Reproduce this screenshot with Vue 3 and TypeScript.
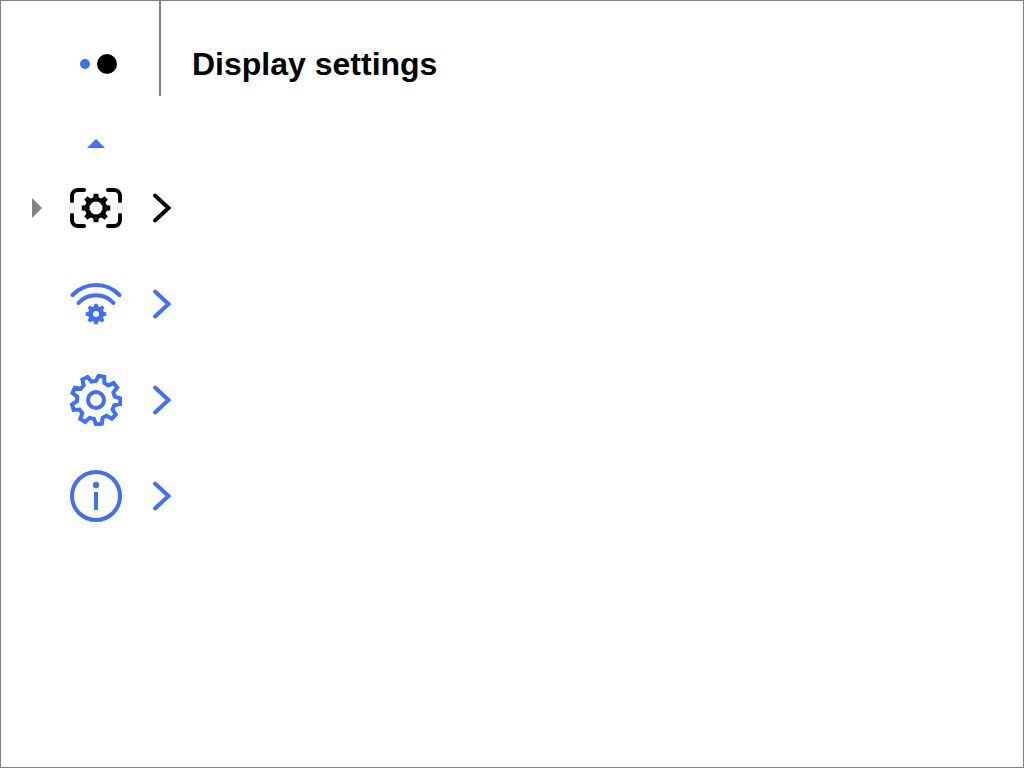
<script setup lang="ts">
// builds a gear outline, `top` and `base` are tooth half widths as a share of one tooth step
function gearPath(cx: number, cy: number, outer: number, root: number, teeth: number, rot: number, top = 0.18, base = 0.28) {
  const step = (Math.PI * 2) / teeth
  const pts: string[] = []
  for (let i = 0; i < teeth; i++) {
    const a = rot + i * step
    const corners: [number, number][] = [
      [root, a - step * base],
      [outer, a - step * top],
      [outer, a + step * top],
      [root, a + step * base],
    ]
    for (const [r, t] of corners)
      pts.push(`${(cx + Math.cos(t) * r).toFixed(2)} ${(cy + Math.sin(t) * r).toFixed(2)}`)
  }
  return `M${pts.join('L')}Z`
}

const cameraGear = gearPath(26, 20, 14.5, 11, 8, 0, 0.2, 0.34)
const wifiGear = gearPath(26, 36, 10.5, 8, 8, 0, 0.2, 0.34)
const bigGear = gearPath(26, 26, 24.5, 19, 9, -1.344, 0.17, 0.33)
</script>

<template>
  <div class="frame">
    <header class="head">
      <div class="status">
        <span class="dot-small" />
        <span class="dot-big" />
      </div>
      <h1 class="title">Display settings</h1>
    </header>

    <div class="scroll-up" />

    <nav class="menu">
      <div class="row">
        <span class="marker" />
        <svg class="icon" width="52" height="40" viewBox="0 0 52 40">
          <g fill="none" stroke="#000" stroke-width="4" stroke-linecap="round">
            <path d="M14 2H8a6 6 0 0 0-6 6v5" />
            <path d="M38 2h6a6 6 0 0 1 6 6v5" />
            <path d="M2 27v5a6 6 0 0 0 6 6h6" />
            <path d="M50 27v5a6 6 0 0 1-6 6h-6" />
          </g>
          <path :d="cameraGear" fill="#000" />
          <circle cx="26" cy="20" r="6.500" fill="#fff" />
        </svg>
        <svg class="chev" width="24" height="32" viewBox="0 0 24 32">
          <path d="M4 3.500L17.500 16 4 28.500" fill="none" stroke="#000" stroke-width="4" stroke-linecap="round" />
        </svg>
      </div>

      <div class="row">
        <span class="marker off" />
        <svg class="icon" width="52" height="52" viewBox="0 0 52 52">
          <g fill="none" stroke="#3f6fff" stroke-width="4" stroke-linecap="round">
            <path d="M2.500 17A32.600 32.600 0 0 1 49.500 17" />
            <path d="M8.500 25A23.700 23.700 0 0 1 43.500 25" />
          </g>
          <path :d="wifiGear" fill="#3f6fff" />
          <circle cx="26" cy="36" r="3" fill="#fff" />
        </svg>
        <svg class="chev" width="24" height="32" viewBox="0 0 24 32">
          <path d="M4 3.500L17.500 16 4 28.500" fill="none" stroke="#3f6fff" stroke-width="4" stroke-linecap="round" />
        </svg>
      </div>

      <div class="row">
        <span class="marker off" />
        <svg class="icon" width="52" height="52" viewBox="0 0 52 52">
          <path :d="bigGear" fill="none" stroke="#3f6fff" stroke-width="4" />
          <circle cx="26" cy="26" r="8" fill="none" stroke="#3f6fff" stroke-width="4" />
        </svg>
        <svg class="chev" width="24" height="32" viewBox="0 0 24 32">
          <path d="M4 3.500L17.500 16 4 28.500" fill="none" stroke="#3f6fff" stroke-width="4" stroke-linecap="round" />
        </svg>
      </div>

      <div class="row">
        <span class="marker off" />
        <svg class="icon" width="52" height="52" viewBox="0 0 52 52">
          <circle cx="26" cy="26" r="24" fill="none" stroke="#3f6fff" stroke-width="4" />
          <circle cx="26" cy="15" r="3.200" fill="#3f6fff" />
          <rect x="24" y="22" width="4" height="18" fill="#3f6fff" />
        </svg>
        <svg class="chev" width="24" height="32" viewBox="0 0 24 32">
          <path d="M4 3.500L17.500 16 4 28.500" fill="none" stroke="#3f6fff" stroke-width="4" stroke-linecap="round" />
        </svg>
      </div>
    </nav>
  </div>
</template>

<style scoped>
.frame {
  width: 1024px;
  height: 768px;
  box-sizing: border-box;
  border: 1px solid #808080;
  background: #fff;
  overflow: hidden;
}

.head {
  display: flex;
  height: 95px;
}

.status {
  width: 160px;
  box-sizing: border-box;
  border-right: 2px solid #808080;
  display: flex;
  align-items: center;
  padding: 31px 0 0 79px;
  gap: 7px;
}

.dot-small {
  width: 10px;
  height: 10px;
  border-radius: 50%;
  background: #3f6fff;
}

.dot-big {
  width: 20px;
  height: 20px;
  border-radius: 50%;
  background: #000;
}

.title {
  margin: 0 0 0 31px;
  padding-top: 31px;
  align-self: center;
  font-family: "Liberation Sans", Arial, sans-serif;
  font-size: 32px;
  font-weight: 700;
  color: #000;
}

.scroll-up {
  width: 0;
  height: 0;
  margin: 43px 0 12px 86px;
  border-left: 9px solid transparent;
  border-right: 9px solid transparent;
  border-bottom: 9px solid #3f6fff;
}

.menu {
  display: flex;
  flex-direction: column;
}

.row {
  display: flex;
  align-items: center;
  height: 96px;
  padding-left: 31px;
}

.marker {
  width: 0;
  height: 0;
  border-top: 10px solid transparent;
  border-bottom: 10px solid transparent;
  border-left: 10px solid #808080;
}

.marker.off {
  border-left-color: transparent;
}

.icon {
  margin-left: 28px;
  flex: none;
}

.chev {
  margin-left: 29px;
  flex: none;
}
</style>
